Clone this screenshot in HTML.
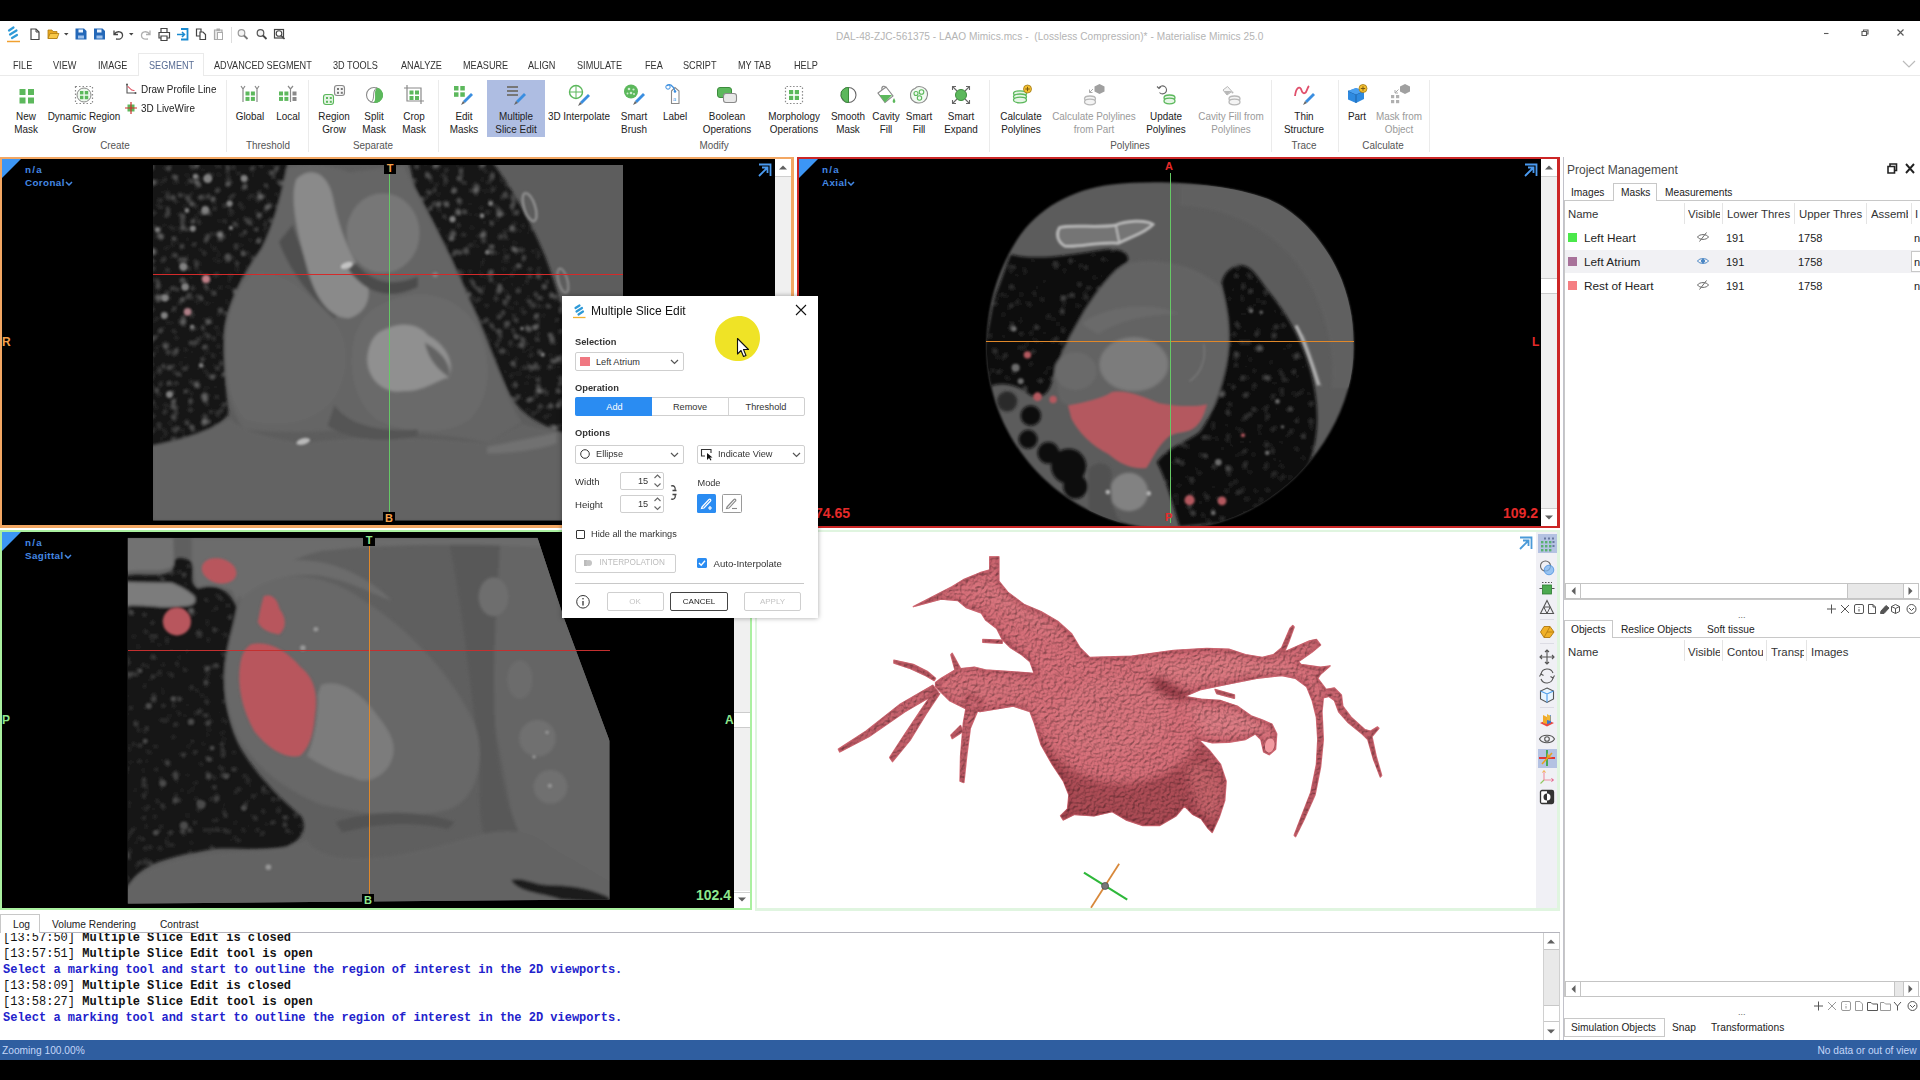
<!DOCTYPE html>
<html>
<head>
<meta charset="utf-8">
<title>Mimics</title>
<style>
*{box-sizing:border-box;margin:0;padding:0}
html,body{width:1920px;height:1080px;overflow:hidden;background:#000;font-family:"Liberation Sans",sans-serif;font-size:11px;color:#222}
.abs{position:absolute}
#app{position:absolute;left:0;top:21px;width:1920px;height:1039px;background:#fff;overflow:hidden}
/* coordinates inside #app are page-y minus 21; we use a wrapper shifted instead */
#pg{position:absolute;left:0;top:0;width:1920px;height:1080px}
.t{position:absolute;white-space:nowrap;line-height:1}
/* title */
#title{left:836px;top:32px;font-size:10.1px;color:#b4b4b4;letter-spacing:0.05px}
/* menu */
.menu{top:60px;font-size:10.5px;color:#333;transform:scaleX(.87);transform-origin:0 0}
#segtab{left:138px;top:53px;width:66px;height:23px;border:1px solid #eaeaea;border-bottom:none;background:#fff}
#ribline{left:0;top:75px;width:1920px;height:1px;background:#eaeaea}
/* ribbon */
.rl{position:absolute;white-space:nowrap;line-height:12.7px;font-size:11px;color:#222;text-align:center;transform:translateX(-50%) scaleX(.9)}
.rl.dis{color:#9a9a9a}
.grp{position:absolute;top:140px;font-size:11px;color:#555;transform:translateX(-50%) scaleX(.9);white-space:nowrap;line-height:1}
.sep{position:absolute;top:80px;width:1px;height:72px;background:#ebebeb}
/* viewports */
.vp{position:absolute;overflow:hidden;background:#000}
.vlabel{position:absolute;font-size:9.8px;font-weight:bold;color:#4488e4;line-height:13px;white-space:nowrap;letter-spacing:.4px}.vlabel i{font-style:normal;letter-spacing:1.3px}
.sb{position:absolute;background:#f0f0f0}
.sbbtn{position:absolute;left:0;width:100%;height:17px;background:#fff}
/* right panel */
.ptab{margin-top:1px;position:absolute;font-size:10.2px;color:#222;white-space:nowrap;line-height:1}
.hdr{margin-top:1px;position:absolute;font-size:11.4px;color:#333;white-space:nowrap;line-height:1}
.row{margin-top:.6px;position:absolute;font-size:11.8px;color:#222;white-space:nowrap;line-height:1}
.dl{font-size:9.300px;color:#333}.dt{font-size:9.200px;color:#333}.cb{border:1px solid #cfcfcf;border-radius:2px;background:#fff}
/* log */
.log{position:absolute;left:3px;font-family:"Liberation Mono",monospace;font-size:12px;font-weight:bold;color:#111;white-space:pre;line-height:12px;letter-spacing:0}
.log .ts{font-weight:normal}
.log.b{color:#2222cc}
</style>
</head>
<body>
<div id="pg">
<div id="app"></div>

<!-- TITLE BAR -->
<svg class="abs" style="left:0;top:24px" width="300" height="22" viewBox="0 0 300 22" fill="none">
<!-- logo -->
<g stroke="#2e9ad8" stroke-width="2.2" stroke-linecap="round"><path d="M9,6.500L13.500,3.500M10,10.500L16.500,6.500M12,14L17,11"/></g><path d="M7,17.500H20" stroke="#f0a030" stroke-width="1.500"/>
<!-- new -->
<path d="M31,5H36L39,8V15.500H31Z" stroke="#444" stroke-width="1.200" fill="#fff"/><path d="M36,5V8H39" stroke="#444" stroke-width="1"/>
<!-- open -->
<path d="M48,6H52L53,7.500H57V14.500H48Z" fill="#e8a820" stroke="#b07c10" stroke-width=".8"/><path d="M48,14.500L50,9.500H59L57,14.500Z" fill="#f8c848" stroke="#b07c10" stroke-width=".8"/>
<path d="M64,9H68.500L66.250,11.500Z" fill="#444"/>
<!-- save -->
<path d="M75.500,4.500H84L86.500,7V15.500H75.500Z" fill="#2468b8"/><rect x="78.500" y="5.500" width="4.500" height="3" fill="#eaf2fc"/><rect x="78" y="11.500" width="6" height="3" fill="#9cc0ec"/>
<path d="M94,4.500H102.500L105,7V15.500H94Z" fill="#2468b8"/><rect x="97" y="5.500" width="4.500" height="3" fill="#eaf2fc"/><rect x="96.500" y="11.500" width="6" height="3" fill="#9cc0ec"/>
<!-- undo -->
<path d="M114,6.500V10.500H118M114,10.500C117,6 123,7.500 122.500,12C122,15 119,15.500 116,15" stroke="#444" stroke-width="1.300"/>
<path d="M129,9H133.500L131.250,11.500Z" fill="#444"/>
<!-- redo -->
<path d="M150,6.500V10.500H146M150,10.500C147,6 141,7.500 141.500,12C142,15 145,15.500 148,15" stroke="#b0b0b0" stroke-width="1.300"/>
<!-- print -->
<path d="M161,8.500V4.500H167V8.500M159,8.500H169.500V14H167V12H161V14H159ZM161,12V16.500H167V12" stroke="#444" stroke-width="1.200"/>
<!-- export -->
<path d="M181,5H187.500V15.500H181M187.500,5" stroke="#1a8ad0" stroke-width="1.800"/><path d="M177,10.500H184M182,8L184.500,10.500L182,13" stroke="#1a8ad0" stroke-width="1.500"/>
<!-- copy -->
<path d="M196.500,5H201V12H196.500Z" stroke="#444" stroke-width="1.200" fill="#fff"/><path d="M200,8H203L205.500,10.500V15.500H200Z" stroke="#444" stroke-width="1.200" fill="#fff"/>
<!-- paste -->
<path d="M214.500,6H222V15.500H214.500Z" stroke="#aaa" stroke-width="1.200" fill="#e8e8e8"/><rect x="216.500" y="4.500" width="3.500" height="2.500" fill="#aaa"/><rect x="217.500" y="8.500" width="5" height="7" fill="#fff" stroke="#aaa" stroke-width="1"/>
<path d="M231.500,3V19" stroke="#ddd" stroke-width="1"/>
<!-- zoom icons -->
<circle cx="241.500" cy="9" r="3.300" stroke="#999" stroke-width="1.200" fill="#f4f4f4"/><path d="M244,11.500L247.500,15" stroke="#777" stroke-width="1.800"/>
<circle cx="260.500" cy="9" r="3.300" stroke="#555" stroke-width="1.200" fill="#f4f4f4"/><path d="M263,11.500L266.500,15" stroke="#444" stroke-width="1.800"/>
<rect x="274.500" y="5.500" width="9" height="8.500" stroke="#444" stroke-width="1.200"/><circle cx="279" cy="9.500" r="2.800" stroke="#444" stroke-width="1.100" fill="#fff"/><path d="M281,11.500L284.500,15" stroke="#444" stroke-width="1.600"/>
</svg>
<svg class="abs" style="left:1815px;top:25px" width="100" height="16" viewBox="0 0 100 16" fill="none" stroke="#5a5a5a" stroke-width="1.100"><path d="M9,8.500H13.500"/><path d="M47,6.500H51.500V10.500H47ZM48.500,6.500V5H53V9H51.500"/><path d="M82.500,4.500L88.500,10.500M88.500,4.500L82.500,10.500" stroke-width="1.200"/></svg>
<svg class="abs" style="left:1902px;top:59px" width="14" height="10" viewBox="0 0 14 10" fill="none" stroke="#bbb" stroke-width="1.200"><path d="M1,2L7,8L13,2"/></svg>

<div class="t" id="title">DAL-48-ZJC-561375 - LAAO Mimics.mcs -&nbsp; (Lossless Compression)* - Materialise Mimics 25.0</div>

<!-- MENU -->
<div class="abs" id="ribline"></div>
<div class="abs" id="segtab"></div>
<div class="t menu" style="left:13px">FILE</div>
<div class="t menu" style="left:53px">VIEW</div>
<div class="t menu" style="left:98px">IMAGE</div>
<div class="t menu" style="left:149px;color:#586c94">SEGMENT</div>
<div class="t menu" style="left:214px">ADVANCED SEGMENT</div>
<div class="t menu" style="left:333px">3D TOOLS</div>
<div class="t menu" style="left:401px">ANALYZE</div>
<div class="t menu" style="left:463px">MEASURE</div>
<div class="t menu" style="left:528px">ALIGN</div>
<div class="t menu" style="left:577px">SIMULATE</div>
<div class="t menu" style="left:645px">FEA</div>
<div class="t menu" style="left:683px">SCRIPT</div>
<div class="t menu" style="left:738px">MY TAB</div>
<div class="t menu" style="left:794px">HELP</div>

<!-- RIBBON -->
<!--RIB--><div class="abs" style="left:487px;top:80px;width:58px;height:57px;background:#aebde2"></div>
<svg class="abs" style="left:14px;top:83px" width="24" height="24" viewBox="0 0 24 24"><rect x="5.5" y="6.0" width="6" height="6" fill="#5cb85c"/><rect x="5.5" y="14.5" width="6" height="6" fill="#5cb85c"/><rect x="14.0" y="6.0" width="6" height="6" fill="#5cb85c"/><rect x="14.0" y="14.5" width="6" height="6" fill="#5cb85c"/></svg><div class="rl" style="left:26px;top:110px">New<br>Mask</div>
<svg class="abs" style="left:72px;top:83px" width="24" height="24" viewBox="0 0 24 24"><rect x="3.5" y="3.5" width="17" height="17" fill="none" stroke="#8a8a8a" stroke-dasharray="1.5 2" stroke-width="1.2"/><circle cx="12" cy="12" r="7" fill="#eef8ee" stroke="#8a8a8a" stroke-width="1"/><rect x="8.0" y="8.0" width="3.4" height="3.4" fill="#5cb85c"/><rect x="8.0" y="12.8" width="3.4" height="3.4" fill="#5cb85c"/><rect x="12.8" y="8.0" width="3.4" height="3.4" fill="#5cb85c"/><rect x="12.8" y="12.8" width="3.4" height="3.4" fill="#5cb85c"/></svg><div class="rl" style="left:84px;top:110px">Dynamic Region<br>Grow</div>
<svg class="abs" style="left:238px;top:83px" width="24" height="24" viewBox="0 0 24 24"><path d="M3,3L5,6L7,3M5,6V19M17,3L19,6L21,3M19,6V19" fill="none" stroke="#8a8a8a" stroke-width="1.2"/><rect x="7.5" y="8.5" width="4" height="4" fill="#5cb85c"/><rect x="7.5" y="13.9" width="4" height="4" fill="#5cb85c"/><rect x="12.9" y="8.5" width="4" height="4" fill="#5cb85c"/><rect x="12.9" y="13.9" width="4" height="4" fill="#5cb85c"/></svg><div class="rl" style="left:250px;top:110px">Global</div>
<svg class="abs" style="left:276px;top:83px" width="24" height="24" viewBox="0 0 24 24"><rect x="3.0" y="8.5" width="4" height="4" fill="#5cb85c"/><rect x="3.0" y="13.9" width="4" height="4" fill="#5cb85c"/><rect x="8.4" y="8.5" width="4" height="4" fill="#5cb85c"/><rect x="8.4" y="13.9" width="4" height="4" fill="#5cb85c"/><path d="M12,3L14.5,6L17,3M14.500,6V19" fill="none" stroke="#8a8a8a" stroke-width="1.2"/><rect x="16.500" y="8.500" width="4" height="4" fill="#8a8a8a"/><rect x="16.500" y="14" width="4" height="4" fill="#8a8a8a"/></svg><div class="rl" style="left:288px;top:110px">Local</div>
<svg class="abs" style="left:321.5px;top:83px" width="24" height="24" viewBox="0 0 24 24"><rect x="12.500" y="2.500" width="10" height="10" rx="2.500" fill="#f4f4f4" stroke="#8a8a8a" stroke-width="1.100"/><rect x="15.0" y="5.0" width="2" height="2" fill="#777"/><rect x="15.0" y="8.8" width="2" height="2" fill="#777"/><rect x="18.8" y="5.0" width="2" height="2" fill="#777"/><rect x="18.8" y="8.8" width="2" height="2" fill="#777"/><rect x="1.500" y="11.500" width="10" height="10" rx="2.500" fill="#e4f4e4" stroke="#5cb85c" stroke-width="1.100"/><rect x="4.0" y="14.0" width="2" height="2" fill="#5cb85c"/><rect x="4.0" y="17.8" width="2" height="2" fill="#5cb85c"/><rect x="7.8" y="14.0" width="2" height="2" fill="#5cb85c"/><rect x="7.8" y="17.8" width="2" height="2" fill="#5cb85c"/></svg><div class="rl" style="left:333.5px;top:110px">Region<br>Grow</div>
<svg class="abs" style="left:362px;top:83px" width="24" height="24" viewBox="0 0 24 24"><circle cx="12" cy="12" r="7.500" fill="#fff" stroke="#8a8a8a" stroke-width="1.100"/><path d="M15,4.800A7.500,7.500 0 0 1 12,19.500C15,16 12,9 15,4.800Z" fill="#5cb85c"/><path d="M12,19.500A7.500,7.500 0 0 0 15,4.800C11,9 15,15 12,19.500Z" fill="#5cb85c"/><path d="M9,19.500C14,15 9,9 15,4.500" fill="none" stroke="#8a8a8a" stroke-width="1"/></svg><div class="rl" style="left:374px;top:110px">Split<br>Mask</div>
<svg class="abs" style="left:402px;top:83px" width="24" height="24" viewBox="0 0 24 24"><path d="M5,2V18H22M2,5H19V21" fill="none" stroke="#8a8a8a" stroke-width="1.200"/><rect x="7.5" y="7.5" width="4" height="4" fill="#5cb85c"/><rect x="7.5" y="13.0" width="4" height="4" fill="#5cb85c"/><rect x="13.0" y="7.5" width="4" height="4" fill="#5cb85c"/><rect x="13.0" y="13.0" width="4" height="4" fill="#5cb85c"/></svg><div class="rl" style="left:414px;top:110px">Crop<br>Mask</div>
<svg class="abs" style="left:452px;top:83px" width="24" height="24" viewBox="0 0 24 24"><rect x="2.0" y="3.0" width="4.5" height="4.5" fill="#5cb85c"/><rect x="2.0" y="9.3" width="4.5" height="4.5" fill="#5cb85c"/><rect x="8.3" y="3.0" width="4.5" height="4.5" fill="#5cb85c"/><rect x="8.3" y="9.3" width="4.5" height="4.5" fill="#5cb85c"/><path d="M11,18L19,10L21,12L13,20Z" fill="#3a8ee0"/><path d="M9,22L11,18L13,20Z" fill="#666"/></svg><div class="rl" style="left:464px;top:110px">Edit<br>Masks</div>
<svg class="abs" style="left:504px;top:83px" width="24" height="24" viewBox="0 0 24 24"><path d="M3,4H14M3,8H14M3,12H14" stroke="#777" stroke-width="1.800"/><path d="M12,18L20,10L22,12L14,20Z" fill="#3a8ee0"/><path d="M10,22L12,18L14,20Z" fill="#666"/></svg><div class="rl" style="left:516px;top:110px">Multiple<br>Slice Edit</div>
<svg class="abs" style="left:567px;top:83px" width="24" height="24" viewBox="0 0 24 24"><circle cx="9" cy="9" r="6.500" fill="none" stroke="#5cb85c" stroke-width="1.400"/><path d="M9,2.500V15.500M2.500,9H15.500" stroke="#5cb85c" stroke-width="1"/><path d="M13,19L21,11L23,13L15,21Z" fill="#3a8ee0"/><path d="M11,23L13,19L15,21Z" fill="#666"/></svg><div class="rl" style="left:579px;top:110px">3D Interpolate</div>
<svg class="abs" style="left:622px;top:83px" width="24" height="24" viewBox="0 0 24 24"><circle cx="9" cy="8.500" r="7" fill="#5cb85c"/><circle cx="7" cy="6" r="1.300" fill="#cfeccf"/><circle cx="11.500" cy="6.500" r="1.100" fill="#cfeccf"/><circle cx="9" cy="10" r="1.300" fill="#cfeccf"/><circle cx="12" cy="11" r="1" fill="#cfeccf"/><circle cx="5.500" cy="10.500" r="1" fill="#cfeccf"/><path d="M13,18L21,10L23,12L15,20Z" fill="#3a8ee0"/><path d="M11,22L13,18L15,20Z" fill="#666"/></svg><div class="rl" style="left:634px;top:110px">Smart<br>Brush</div>
<svg class="abs" style="left:662.5px;top:83px" width="24" height="24" viewBox="0 0 24 24"><path d="M8.500,8L12,4.500L16,8V20.500H8.500Z" fill="#fff" stroke="#8a8a8a" stroke-width="1.100"/><circle cx="12" cy="8.500" r="1.300" fill="#3a8ee0"/><path d="M4,3C6,0 10,2 12,8" fill="none" stroke="#3a8ee0" stroke-width="1.200"/><circle cx="5" cy="4" r="2.200" fill="none" stroke="#3a8ee0" stroke-width="1"/><text x="10" y="18" font-size="7" fill="#3a8ee0" font-family="Liberation Serif">a</text></svg><div class="rl" style="left:674.5px;top:110px">Label</div>
<svg class="abs" style="left:714.5px;top:83px" width="24" height="24" viewBox="0 0 24 24"><rect x="2.500" y="4.500" width="14" height="10" rx="2.500" fill="#5cb85c" stroke="#3c8c3c" stroke-width="1"/><rect x="8.500" y="10.500" width="13" height="9" rx="2.500" fill="#e8e8e8" stroke="#8a8a8a" stroke-width="1.100"/></svg><div class="rl" style="left:726.5px;top:110px">Boolean<br>Operations</div>
<svg class="abs" style="left:781.5px;top:83px" width="24" height="24" viewBox="0 0 24 24"><rect x="3.500" y="3.500" width="17" height="17" rx="1" fill="none" stroke="#8a8a8a" stroke-dasharray="1.500 1.800" stroke-width="1.200"/><rect x="7.0" y="7.0" width="4.2" height="4.2" fill="#5cb85c"/><rect x="7.0" y="12.8" width="4.2" height="4.2" fill="#5cb85c"/><rect x="12.8" y="7.0" width="4.2" height="4.2" fill="#5cb85c"/><rect x="12.8" y="12.8" width="4.2" height="4.2" fill="#5cb85c"/></svg><div class="rl" style="left:793.5px;top:110px">Morphology<br>Operations</div>
<svg class="abs" style="left:836px;top:83px" width="24" height="24" viewBox="0 0 24 24"><circle cx="12.500" cy="12" r="7.500" fill="#fff" stroke="#666" stroke-width="1.100"/><path d="M12.500,4.500C9,4.500 8,6 7,7C5,8 5,10 5.500,11C4.500,13 5.500,15 7,16C8,18.500 10,19.500 12.500,19.500Z" fill="#5cb85c" stroke="#3c8c3c" stroke-width="1"/></svg><div class="rl" style="left:848px;top:110px">Smooth<br>Mask</div>
<svg class="abs" style="left:873.5px;top:83px" width="24" height="24" viewBox="0 0 24 24"><path d="M4,10L12,4L19,13L11,19.500Z" fill="#fff" stroke="#8a8a8a" stroke-width="1.100"/><path d="M5.500,12H18L11,19.500Z" fill="#5cb85c"/><path d="M8,7C7,3 11,2 12,5" fill="none" stroke="#8a8a8a" stroke-width="1.100"/><path d="M20,15C21.500,17.500 22,19.500 20,20C18,19.500 18.500,17.500 20,15Z" fill="#5cb85c"/></svg><div class="rl" style="left:885.5px;top:110px">Cavity<br>Fill</div>
<svg class="abs" style="left:907px;top:83px" width="24" height="24" viewBox="0 0 24 24"><path d="M12,3.500C17,3.500 21,7 20.500,12C20,17 16,20.500 11,20C6,19.500 3,16 3.500,11C4,8 6,6 8,5.500C9,4 10.500,3.500 12,3.500Z" fill="#f2faf2" stroke="#8a8a8a" stroke-width="1.100"/><circle cx="9" cy="10.500" r="2" fill="none" stroke="#5cb85c" stroke-width="1.100"/><circle cx="14.500" cy="9" r="2.300" fill="none" stroke="#5cb85c" stroke-width="1.100"/><circle cx="12.500" cy="15" r="2.200" fill="none" stroke="#5cb85c" stroke-width="1.100"/></svg><div class="rl" style="left:919px;top:110px">Smart<br>Fill</div>
<svg class="abs" style="left:949px;top:83px" width="24" height="24" viewBox="0 0 24 24"><circle cx="12" cy="12" r="5.500" fill="#5cb85c" stroke="#3c8c3c" stroke-width="1"/><path d="M8,8L3.500,3.500M3.500,7V3.500H7M16,8L20.500,3.500M17,3.500H20.500V7M8,16L3.500,20.500M3.500,17V20.500H7M16,16L20.500,20.500M17,20.500H20.500V17" fill="none" stroke="#666" stroke-width="1.100"/></svg><div class="rl" style="left:961px;top:110px">Smart<br>Expand</div>
<svg class="abs" style="left:1009px;top:83px" width="24" height="24" viewBox="0 0 24 24"><ellipse cx="11" cy="10.6" rx="6.5" ry="2.8" fill="#e6f5e6" stroke="#5cb85c" stroke-width="1.3"/><ellipse cx="11" cy="13.8" rx="6.5" ry="2.8" fill="#e6f5e6" stroke="#5cb85c" stroke-width="1.3"/><ellipse cx="11" cy="17.0" rx="6.5" ry="2.8" fill="#e6f5e6" stroke="#5cb85c" stroke-width="1.3"/><circle cx="18.5" cy="6" r="4" fill="#f5c030" stroke="#a07818" stroke-width=".8"/><path d="M16.3,6H20.7M18.5,3.8V8.2" stroke="#7a5a10" stroke-width="1"/></svg><div class="rl" style="left:1021px;top:110px">Calculate<br>Polylines</div>
<svg class="abs" style="left:1081.5px;top:83px" width="24" height="24" viewBox="0 0 24 24"><ellipse cx="8" cy="15.8" rx="5.5" ry="2.8" fill="#f4f4f4" stroke="#b8b8b8" stroke-width="1.3"/><ellipse cx="8" cy="19.0" rx="5.5" ry="2.8" fill="#f4f4f4" stroke="#b8b8b8" stroke-width="1.3"/><path d="M17.5,1L22.5,3.5V8.5L17.5,11L12.5,8.5V3.5Z" fill="#a0a0a0"/><path d="M11,6L7.500,9.500M7.500,6.500V9.500H10.500" fill="none" stroke="#aaa" stroke-width="1"/></svg><div class="rl dis" style="left:1093.5px;top:110px">Calculate Polylines<br>from Part</div>
<svg class="abs" style="left:1154px;top:83px" width="24" height="24" viewBox="0 0 24 24"><path d="M5,5A4,4 0 1 1 5.500,9.500" fill="none" stroke="#666" stroke-width="1.100"/><path d="M3,3.500L5,5.500L7,3.500" fill="none" stroke="#666" stroke-width="1.100"/><ellipse cx="15.5" cy="14.8" rx="5.5" ry="2.8" fill="#e6f5e6" stroke="#5cb85c" stroke-width="1.3"/><ellipse cx="15.5" cy="18.0" rx="5.5" ry="2.8" fill="#e6f5e6" stroke="#5cb85c" stroke-width="1.3"/></svg><div class="rl" style="left:1166px;top:110px">Update<br>Polylines</div>
<svg class="abs" style="left:1219px;top:83px" width="24" height="24" viewBox="0 0 24 24"><path d="M4,7L8.500,3.500L13,8.500L8,12Z" fill="#f4f4f4" stroke="#b8b8b8" stroke-width="1"/><path d="M5,8H12.500L8,12Z" fill="#b8b8b8"/><circle cx="13.500" cy="9.500" r="1" fill="#b8b8b8"/><ellipse cx="15.5" cy="15.8" rx="5.5" ry="2.8" fill="#f4f4f4" stroke="#b8b8b8" stroke-width="1.3"/><ellipse cx="15.5" cy="19.0" rx="5.5" ry="2.8" fill="#f4f4f4" stroke="#b8b8b8" stroke-width="1.3"/></svg><div class="rl dis" style="left:1231px;top:110px">Cavity Fill from<br>Polylines</div>
<svg class="abs" style="left:1292px;top:83px" width="24" height="24" viewBox="0 0 24 24"><path d="M3,13C4,5 7,3 9,6C10,9 11,11 13,10C15,9 15,5 17,3" fill="none" stroke="#e0506c" stroke-width="1.800"/><path d="M13,18L21,10L23,12L15,20Z" fill="#3a8ee0"/><path d="M11,22L13,18L15,20Z" fill="#666"/></svg><div class="rl" style="left:1304px;top:110px">Thin<br>Structure</div>
<svg class="abs" style="left:1344.5px;top:83px" width="24" height="24" viewBox="0 0 24 24"><path d="M11,5L19,8V16L11,20L3,16.500V8Z" fill="#2e8ae0"/><path d="M3,8L11,11.500L19,8M11,11.500V20" fill="none" stroke="#1c62a8" stroke-width="1"/><path d="M3,8L11,5L19,8L11,11.500Z" fill="#4aa0f0"/><circle cx="18" cy="5.5" r="4" fill="#f5c030" stroke="#a07818" stroke-width=".8"/><path d="M15.8,5.5H20.2M18,3.3V7.7" stroke="#7a5a10" stroke-width="1"/></svg><div class="rl" style="left:1356.5px;top:110px">Part</div>
<svg class="abs" style="left:1387px;top:83px" width="24" height="24" viewBox="0 0 24 24"><rect x="4.0" y="12.0" width="3.2" height="3.2" fill="#b0b0b0"/><rect x="4.0" y="17.0" width="3.2" height="3.2" fill="#b0b0b0"/><rect x="9.0" y="12.0" width="3.2" height="3.2" fill="#b0b0b0"/><rect x="9.0" y="17.0" width="3.2" height="3.2" fill="#b0b0b0"/><path d="M18,1L23,3.5V8.5L18,11L13,8.5V3.5Z" fill="#a0a0a0"/><path d="M11.500,6.500L8,10M8,7V10H11" fill="none" stroke="#aaa" stroke-width="1"/></svg><div class="rl dis" style="left:1399px;top:110px">Mask from<br>Object</div>
<svg class="abs" style="left:125px;top:83px" width="12" height="12" viewBox="0 0 12 12" fill="none"><path d="M2,1V10H11" stroke="#555" stroke-width="1.100"/><path d="M2.500,3.500C5,4 5,8 9.500,7.500" stroke="#e05060" stroke-width="1.100"/><circle cx="2" cy="1.500" r="1" fill="#555"/><circle cx="10.500" cy="10" r="1" fill="#555"/></svg><div class="rl" style="left:141px;top:83px;transform:scaleX(.9);transform-origin:0 0">Draw Profile Line</div><svg class="abs" style="left:125px;top:102px" width="12" height="12" viewBox="0 0 12 12"><rect x="2.500" y="2.500" width="7" height="7" fill="#5cb85c"/><path d="M0,6H12M6,0V12" stroke="#d03030" stroke-width="1.200"/></svg><div class="rl" style="left:141px;top:102px;transform:scaleX(.9);transform-origin:0 0">3D LiveWire</div>
<div class="grp" style="left:114.5px">Create</div><div class="grp" style="left:268px">Threshold</div><div class="grp" style="left:373px">Separate</div><div class="grp" style="left:713.5px">Modify</div><div class="grp" style="left:1130px">Polylines</div><div class="grp" style="left:1304px">Trace</div><div class="grp" style="left:1383px">Calculate</div><div class="sep" style="left:226px"></div><div class="sep" style="left:308px"></div><div class="sep" style="left:437.5px"></div><div class="sep" style="left:988.5px"></div><div class="sep" style="left:1271px"></div><div class="sep" style="left:1337.5px"></div><div class="sep" style="left:1429px"></div><!--/RIB-->

<!-- VIEWPORTS -->
<div class="abs" style="left:0;top:157px;width:794px;height:371px;background:#f3a763"></div>
<div class="vp" style="left:2px;top:159px;width:773px;height:366px">
<svg class="abs" style="left:0;top:0" width="773" height="366" viewBox="2 159 773 366">
<defs>
<filter id="bz" x="-5%" y="-5%" width="110%" height="110%"><feGaussianBlur stdDeviation="5"/></filter>
<filter id="bz2" x="-5%" y="-5%" width="110%" height="110%"><feGaussianBlur stdDeviation="2.5"/></filter>
<filter id="ltex" x="0" y="0" width="100%" height="100%"><feTurbulence type="fractalNoise" baseFrequency="0.045" numOctaves="3" seed="5"/><feColorMatrix values="0 0 0 0 .5  0 0 0 0 .5  0 0 0 0 .5  0 0 0 2.4 -1.42"/><feComposite in2="SourceGraphic" operator="in"/><feGaussianBlur stdDeviation="2"/></filter><filter id="ltex2" x="0" y="0" width="100%" height="100%"><feTurbulence type="fractalNoise" baseFrequency="0.045" numOctaves="3" seed="5"/><feColorMatrix values="0 0 0 0 .4  0 0 0 0 .4  0 0 0 0 .4  0 0 0 2.2 -1.42"/><feComposite in2="SourceGraphic" operator="in"/><feGaussianBlur stdDeviation="2"/></filter>
<clipPath id="ccor"><rect x="153" y="165" width="470" height="355.5"/></clipPath>
</defs>
<g clip-path="url(#ccor)">
<g transform="translate(140,155) scale(0.34722)">
<rect x="0" y="0" width="1440" height="1080" fill="#5d5d5d"/>
<g filter="url(#bz)">
<!-- heart mass -->
<path d="M420,40 C470,20 560,30 600,50 L760,30 C800,120 860,230 900,310 C950,420 1000,520 1040,640 C1060,700 1080,740 1100,770 L1000,830 C900,800 700,800 600,790 C500,800 400,800 300,790 C260,740 240,650 245,520 C255,420 300,340 350,270 C385,200 405,120 420,40 Z" fill="#656565"/>
<!-- below diaphragm -->
<path d="M38,835 C120,820 200,790 260,760 C300,800 400,820 470,830 C600,810 800,810 1000,830 L1100,775 C1180,800 1300,810 1390,780 L1390,1050 L38,1050 Z" fill="#636363"/>
<!-- left lung -->
<path d="M30,20 L425,20 C410,110 385,200 350,270 C300,340 255,420 243,500 C238,600 250,690 255,745 C230,790 120,820 30,838 Z" fill="#161616"/>
<!-- right lung -->
<path d="M775,20 L1015,20 C1080,110 1130,200 1170,300 C1200,380 1230,480 1250,560 L1250,810 C1180,790 1110,760 1070,700 C1020,600 990,500 950,420 C900,300 850,200 790,90 Z" fill="#161616"/>
<path d="M30,20 L425,20 C410,110 385,200 350,270 C300,340 255,420 243,500 C238,600 250,690 255,745 C230,790 120,820 30,838 Z" fill="#fff" filter="url(#ltex)"/><path d="M775,20 L1015,20 C1080,110 1130,200 1170,300 C1200,380 1230,480 1250,560 L1250,810 C1180,790 1110,760 1070,700 C1020,600 990,500 950,420 C900,300 850,200 790,90 Z" fill="#fff" filter="url(#ltex)"/>
<!-- dark band between aorta and RA -->
<path d="M400,250 C430,330 480,400 560,470 L590,440 C520,380 470,300 440,200 Z" fill="#505050"/>
<!-- RA -->
<path d="M330,340 C400,330 470,380 560,480 C610,540 600,640 560,700 C500,780 380,790 300,760 C250,700 240,600 250,500 C260,430 290,370 330,340 Z" fill="#686868"/>
<!-- aorta -->
<path d="M450,70 C490,30 540,50 555,120 C570,200 600,280 640,340 C680,400 650,460 600,470 C540,470 500,400 480,320 C455,230 430,130 450,70 Z" fill="#8a8a8a"/>
<!-- PA -->
<ellipse cx="700" cy="225" rx="105" ry="115" fill="#777777"/>
<!-- dark groove -->
<path d="M600,330 C650,400 720,420 800,380 L800,350 C730,380 670,370 620,310 Z" fill="#4c4c4c"/>
<!-- LV wall -->
<path d="M700,430 C800,380 900,400 960,480 C1020,580 1010,700 950,760 C880,810 760,800 680,760 C610,700 600,600 620,520 C640,470 660,445 700,430 Z" fill="#6b6b6b"/>
<!-- LV cavity -->
<path d="M690,510 C740,480 800,480 830,520 C870,540 910,590 890,640 C850,650 820,680 760,680 C700,690 650,640 655,580 C660,545 670,525 690,510 Z" fill="#909090"/>
<path d="M820,540 C860,560 900,600 890,640 C860,620 830,590 820,540 Z" fill="#646464"/>
<!-- lower dark bits -->
<path d="M560,720 C600,780 700,800 800,790 L800,810 C700,830 600,820 540,780 Z" fill="#555555"/>
<path d="M1000,840 C1060,830 1150,810 1200,800 L1200,830 C1140,850 1060,860 1000,860 Z" fill="#717171"/>
</g>
<g filter="url(#bz2)">
<!-- lung vessels -->
<g fill="#828282">
<circle cx="195" cy="68" r="13"/><circle cx="160" cy="62" r="8"/><circle cx="300" cy="68" r="10"/><circle cx="258" cy="140" r="9"/>
<circle cx="188" cy="158" r="11"/><circle cx="135" cy="160" r="7"/><circle cx="152" cy="212" r="9"/><circle cx="262" cy="210" r="6"/>
<circle cx="50" cy="215" r="7"/><circle cx="125" cy="322" r="12"/><circle cx="130" cy="380" r="11"/><circle cx="72" cy="412" r="10"/>
<circle cx="70" cy="462" r="10"/><circle cx="85" cy="690" r="10"/><circle cx="176" cy="606" r="7"/><circle cx="150" cy="495" r="6"/>
<circle cx="900" cy="185" r="9"/><circle cx="985" cy="175" r="7"/><circle cx="1000" cy="280" r="6"/><circle cx="1010" cy="140" r="6"/>
<circle cx="1160" cy="575" r="6"/><circle cx="1100" cy="500" r="5"/><circle cx="850" cy="345" r="8"/>
</g>
<circle cx="190" cy="357" r="12" fill="#c08088"/><circle cx="137" cy="452" r="11" fill="#b08088"/>
<!-- calcifications -->
<ellipse cx="595" cy="318" rx="18" ry="9" fill="#c4c4c4" transform="rotate(-20 595 318)"/>
<ellipse cx="470" cy="825" rx="20" ry="9" fill="#b9b9b9" transform="rotate(-15 470 825)"/>
<!-- ribs -->
<ellipse cx="1122" cy="150" rx="16" ry="42" fill="none" stroke="#929292" stroke-width="7" transform="rotate(-18 1122 150)"/>
<ellipse cx="1218" cy="362" rx="13" ry="36" fill="none" stroke="#8d8d8d" stroke-width="6" transform="rotate(-15 1218 362)"/>
</g>
</g>
</g>
<!-- crosshair -->
<rect x="153" y="274" width="470" height="1" fill="#d42a2a"/>
<rect x="389" y="165" width="1" height="356" fill="#66c866"/>
</svg>
<svg class="abs" style="left:0;top:0" width="20" height="20"><path d="M0,0H19L0,19Z" fill="#3c96f5"/></svg>
<div class="vlabel" style="left:23px;top:3.5px"><i>n/a</i><br>Coronal<svg style="display:inline-block;vertical-align:0px;margin-left:0px" width="8" height="5" viewBox="0 0 8 5" fill="none" stroke="#4488e4" stroke-width="1.500"><path d="M1,1L4,4L7,1"/></svg></div>
<div class="t" style="left:382px;top:3px;width:12px;height:12px;background:#000;color:#f5a04a;font-weight:bold;font-size:11px;text-align:center;line-height:12px">T</div>
<div class="t" style="left:381px;top:353px;width:12px;height:12px;background:#000;color:#f5a04a;font-weight:bold;font-size:11px;text-align:center;line-height:12px">B</div>
<div class="t" style="left:0px;top:177px;color:#f5a04a;font-weight:bold;font-size:12px">R</div>
<svg class="abs" style="left:754px;top:3px" width="17" height="17" viewBox="0 0 17 17" fill="none" stroke="#4a9af0" stroke-width="1.8"><path d="M3,2.5H14.5V14M6,5.5H11.5V11M11.5,5.5L3,14"/></svg>
</div>
<div class="sb" style="left:775px;top:159px;width:16px;height:366px"><div class="sbbtn" style="top:0"></div>
<svg class="abs" style="left:4px;top:6px" width="8" height="5"><path d="M0,4.5L4,0.5L8,4.5Z" fill="#606060"/></svg>
<div class="abs" style="left:0;top:17px;width:16px;height:1px;background:#cfcfcf"></div></div>

<div class="abs" style="left:797px;top:157px;width:763px;height:371px;background:#cc2626"></div>
<div class="vp" style="left:799px;top:159px;width:742px;height:367px">
<svg class="abs" style="left:0;top:0" width="742" height="367" viewBox="799 159 742 367">
<defs><clipPath id="cax"><path d="M50,540 C50,400 90,300 140,220 C200,130 300,72 420,58 C550,42 750,52 880,100 C980,140 1060,240 1100,340 C1130,420 1136,480 1136,540 C1136,800 900,1078 592,1078 C290,1078 50,830 50,540 Z"/></clipPath></defs>
<g transform="translate(970,165) scale(0.33784)">
<g filter="url(#bz2)"><path d="M50,540 C50,400 90,300 140,220 C200,130 300,72 420,58 C550,42 750,52 880,100 C980,140 1060,240 1100,340 C1130,420 1136,480 1136,540 C1136,800 900,1078 592,1078 C290,1078 50,830 50,540 Z" fill="#5b5b5b"/></g>
<g clip-path="url(#cax)">
<g filter="url(#bz)">
<!-- outer chest wall slightly lighter band -->
<path d="M620,120 C800,130 950,220 1020,380 C1060,470 1080,560 1070,660 L1136,660 L1136,60 L620,60 Z" fill="#606060"/>
<!-- heart mass -->
<path d="M470,290 C560,270 680,300 740,360 C770,440 770,560 740,680 C700,760 640,800 560,800 C460,760 330,740 270,700 C240,640 270,540 320,460 C360,390 410,320 470,290 Z" fill="#636363"/>
<!-- left lung -->
<path d="M40,560 L70,400 L120,265 C200,285 300,265 400,250 C450,245 478,265 465,288 C420,312 380,370 340,430 C300,500 265,560 245,630 C235,680 215,692 180,682 C140,650 100,640 60,655 Z" fill="#0e0e0e"/>
<circle cx="180" cy="742" r="30" fill="#0e0e0e"/><circle cx="172" cy="812" r="28" fill="#0e0e0e"/><circle cx="232" cy="852" r="32" fill="#0e0e0e"/>
<circle cx="292" cy="892" r="52" fill="#0e0e0e"/><circle cx="312" cy="952" r="36" fill="#0e0e0e"/><circle cx="110" cy="700" r="30" fill="#292929"/>
<!-- right lung -->
<path d="M790,298 C830,290 850,330 880,370 C930,430 975,500 1005,600 C1035,700 1035,800 1005,880 C965,955 880,1015 790,1055 L620,1070 C600,1000 580,930 553,880 C590,830 640,822 680,790 C720,740 750,650 765,560 C775,480 760,420 745,350 C750,320 770,305 790,298 Z" fill="#0c0c0c"/>
<path d="M40,560 L70,400 L120,265 C200,285 300,265 400,250 C450,245 478,265 465,288 C420,312 380,370 340,430 C300,500 265,560 245,630 C235,680 215,692 180,682 C140,650 100,640 60,655 Z" fill="#fff" filter="url(#ltex2)"/><path d="M790,298 C830,290 850,330 880,370 C930,430 975,500 1005,600 C1035,700 1035,800 1005,880 C965,955 880,1015 790,1055 L620,1070 C600,1000 580,930 553,880 C590,830 640,822 680,790 C720,740 750,650 765,560 C775,480 760,420 745,350 C750,320 770,305 790,298 Z" fill="#fff" filter="url(#ltex2)"/>
<!-- aorta root -->
<ellipse cx="485" cy="590" rx="102" ry="80" fill="#7b7b7b"/>
<ellipse cx="312" cy="610" rx="62" ry="55" fill="#6b6b6b"/>
<path d="M330,470 C400,420 520,400 620,440 C560,440 450,450 380,500 Z" fill="#6a6a6a"/>
<!-- desc aorta -->
<circle cx="470" cy="968" r="57" fill="#828282"/>
<!-- spine area -->
<path d="M350,900 C380,870 420,880 420,920 C410,1000 430,1050 470,1080 L350,1080 Z" fill="#515151"/>
</g>
<g filter="url(#bz2)">
<!-- LA mask -->
<path d="M290,712 C340,702 390,692 420,672 C470,664 520,690 560,705 C620,716 670,716 702,708 C692,740 682,772 650,786 C620,796 600,790 580,812 C550,842 540,872 522,897 C480,902 440,882 410,856 C360,830 320,790 300,750 Z" fill="#b4585f"/>
<g fill="#b4585f"><circle cx="170" cy="562" r="11"/><circle cx="200" cy="686" r="13"/><circle cx="246" cy="694" r="11"/><circle cx="650" cy="992" r="15"/><circle cx="746" cy="994" r="13"/><circle cx="808" cy="800" r="6"/></g>
<!-- sternum -->
<path d="M265,185 C300,175 380,187 430,178 C460,165 520,160 542,176 C520,202 470,215 440,232 C380,226 320,246 280,240 C255,225 255,200 265,185 Z" fill="#747474" stroke="#bababa" stroke-width="8"/>
<path d="M432,180 L442,230" stroke="#bababa" stroke-width="6"/>
<!-- ribs -->
<path d="M965,475 C990,520 1012,585 1032,652" stroke="#b4b4b4" stroke-width="9" fill="none"/>
<path d="M985,500 C1005,545 1022,600 1040,655" stroke="#777777" stroke-width="4" fill="none"/>
<path d="M692,530 C700,580 680,620 650,640" stroke="#757575" stroke-width="5" fill="none"/>
<!-- vessels in lungs -->
<g fill="#6c6c6c"><circle cx="130" cy="485" r="8"/><circle cx="135" cy="600" r="12"/><circle cx="150" cy="640" r="9"/><circle cx="832" cy="432" r="6"/><circle cx="862" cy="436" r="5"/>
<circle cx="910" cy="700" r="7"/><circle cx="880" cy="852" r="7"/><circle cx="735" cy="880" r="10"/><circle cx="720" cy="1030" r="7"/><circle cx="925" cy="775" r="5"/></g>
<circle cx="408" cy="968" r="7" fill="#b3b3b3"/><circle cx="529" cy="972" r="7" fill="#b3b3b3"/>
</g>
</g>
</g>
<rect x="986" y="341" width="368" height="1" fill="#e0882a"/>
<rect x="1170" y="173" width="1" height="350" fill="#66c866"/>
</svg>
<svg class="abs" style="left:0;top:0" width="20" height="20"><path d="M0,0H19L0,19Z" fill="#3c96f5"/></svg>
<div class="vlabel" style="left:23px;top:3.5px"><i>n/a</i><br>Axial<svg style="display:inline-block;vertical-align:0px;margin-left:0px" width="8" height="5" viewBox="0 0 8 5" fill="none" stroke="#4488e4" stroke-width="1.500"><path d="M1,1L4,4L7,1"/></svg></div>
<div class="t" style="left:366px;top:2px;color:#e62a2a;font-weight:bold;font-size:11px">A</div>
<div class="t" style="left:366px;top:353px;color:#e62a2a;font-weight:bold;font-size:11px">P</div>
<div class="t" style="left:733px;top:177px;color:#e62a2a;font-weight:bold;font-size:12px">L</div>
<div class="t" style="left:16px;top:347px;color:#e62a2a;font-weight:bold;font-size:14px">74.65</div>
<div class="t" style="left:704px;top:347px;color:#e62a2a;font-weight:bold;font-size:14px">109.2</div>
<svg class="abs" style="left:723px;top:3px" width="17" height="17" viewBox="0 0 17 17" fill="none" stroke="#4a9af0" stroke-width="1.8"><path d="M3,2.5H14.5V14M6,5.5H11.5V11M11.5,5.5L3,14"/></svg>
</div>
<div class="sb" style="left:1541px;top:159px;width:16px;height:367px"><div class="sbbtn" style="top:0"></div><div class="sbbtn" style="bottom:0"></div>
<svg class="abs" style="left:4px;top:6px" width="8" height="5"><path d="M0,4.5L4,0.5L8,4.5Z" fill="#606060"/></svg>
<svg class="abs" style="left:4px;top:356px" width="8" height="5"><path d="M0,0.5L4,4.5L8,0.5Z" fill="#606060"/></svg>
<div class="abs" style="left:0;top:17px;width:16px;height:1px;background:#cfcfcf"></div>
<div class="abs" style="left:0;top:349px;width:16px;height:1px;background:#cfcfcf"></div>
<div class="abs" style="left:0;top:119px;width:16px;height:16px;background:#fff;border-top:1px solid #ccc;border-bottom:1px solid #ccc"></div></div>

<div class="abs" style="left:0;top:529.5px;width:752px;height:380.5px;background:#aaf0a0"></div>
<div class="vp" style="left:2px;top:532px;width:732px;height:376px">
<svg class="abs" style="left:0;top:0" width="732" height="376" viewBox="2 532 732 376">
<defs><clipPath id="csag"><path d="M50,22 L1215,22 L1290,250 L1420,600 L1420,1050 L50,1062 Z"/></clipPath></defs>
<g transform="translate(110,530) scale(0.35185)">
<g clip-path="url(#csag)">
<rect x="0" y="0" width="1478" height="1080" fill="#5f5f5f"/>
<g filter="url(#bz)">
<!-- anterior chest wall lighter -->
<path d="M1100,0 L1300,0 L1478,600 L1478,1080 L1150,1080 C1180,900 1100,600 1060,400 Z" fill="#656565"/>
<!-- darker band (mediastinal fat) -->
<path d="M960,20 L1110,20 C1100,200 1085,380 1095,560 C1105,700 1140,820 1180,900 L1060,860 C1040,760 1060,660 1040,560 C1020,420 1000,200 960,20 Z" fill="#585858"/>
<!-- heart -->
<path d="M370,200 C450,110 600,110 720,200 C850,280 980,420 1040,560 C1070,660 1040,770 960,795 C850,825 700,805 600,780 C500,740 420,680 370,600 C320,500 320,400 330,320 Z" fill="#686868"/>
<!-- aortic arch band lighter -->
<path d="M370,130 C500,50 680,80 800,200 C760,190 700,150 600,130 C500,120 420,150 370,200 Z" fill="#6c6c6c"/>
<!-- lung -->
<path d="M40,130 C100,120 150,140 180,112 C170,80 200,70 232,90 C242,120 220,150 250,166 C300,150 340,170 360,220 C350,280 330,330 325,400 C320,480 340,560 372,622 C420,700 480,760 542,812 C562,842 550,880 500,902 C420,912 350,902 300,906 C220,920 150,932 100,962 C70,982 55,1002 40,1030 Z" fill="#171717"/>
<path d="M40,130 C100,120 150,140 180,112 C170,80 200,70 232,90 C242,120 220,150 250,166 C300,150 340,170 360,220 C350,280 330,330 325,400 C320,480 340,560 372,622 C420,700 480,760 542,812 C562,842 550,880 500,902 C420,912 350,902 300,906 C220,920 150,932 100,962 C70,982 55,1002 40,1030 Z" fill="#fff" filter="url(#ltex2)"/>
<path d="M40,148 L175,150 C200,160 218,170 238,186 C248,200 242,216 215,216 C150,226 100,210 40,216 Z" fill="#7c7c7c"/>
<path d="M40,22 L180,22 L182,100 C150,125 100,110 40,118 Z" fill="#727272"/>
<path d="M232,22 L1230,22 L1232,50 C1100,40 800,36 600,60 C540,75 500,95 480,110 C400,140 370,170 362,205 L345,172 C300,150 262,160 250,165 C236,140 244,110 232,90 Z" fill="#6c6c6c"/>
<!-- LV cavity -->
<path d="M600,440 C660,420 720,470 762,530 C802,580 822,620 792,672 C762,712 720,722 690,702 C640,692 590,662 560,642 C580,600 592,520 590,470 Z" fill="#7b7b7b"/>
<!-- sternum segments -->
<circle cx="1215" cy="592" r="52" fill="#707070"/><circle cx="1252" cy="730" r="48" fill="#707070"/><ellipse cx="1090" cy="190" rx="42" ry="55" fill="#6e6e6e"/><ellipse cx="1165" cy="425" rx="36" ry="55" fill="#6c6c6c"/>
<!-- liver bottom -->
<path d="M50,1020 C80,960 200,930 300,920 C420,915 500,910 560,880 C600,960 800,940 1000,880 C1100,850 1180,840 1250,900 L1420,1000 L1420,1080 L50,1080 Z" fill="#636363"/>
<path d="M640,830 C760,790 900,800 980,830 L960,850 C880,830 760,830 660,860 Z" fill="#535353"/>
<!-- stomach gas -->
<path d="M1140,995 C1180,985 1200,1010 1260,1010 C1320,1010 1380,1025 1420,1045 L1420,1062 L1280,1050 C1220,1030 1160,1030 1140,995 Z" fill="#1a1a1a"/>
</g>
<g filter="url(#bz2)">
<g fill="#b8565d">
<path d="M400,325 C450,313 500,340 542,390 C582,420 592,470 582,530 C577,590 562,622 540,642 C500,652 450,622 410,572 C375,510 360,440 370,380 C375,350 385,335 400,325 Z"/>
<ellipse cx="310" cy="116" rx="50" ry="35" transform="rotate(15 310 116)"/>
<circle cx="190" cy="260" r="40"/>
<path d="M437,188 C462,178 477,200 482,225 C502,250 502,280 480,297 C450,292 430,282 420,262 C425,235 430,210 437,188 Z"/>
</g>
<g fill="#999999"><circle cx="548" cy="335" r="8"/><circle cx="585" cy="282" r="7"/><circle cx="1250" cy="727" r="6"/><circle cx="1205" cy="645" r="5"/><circle cx="1242" cy="575" r="5"/><circle cx="450" cy="958" r="8"/></g>
<g fill="#4c4c4c"><circle cx="110" cy="500" r="9"/><circle cx="180" cy="480" r="8"/><circle cx="230" cy="545" r="9"/><circle cx="150" cy="720" r="10"/><circle cx="260" cy="780" r="12"/><circle cx="210" cy="840" r="12"/><circle cx="330" cy="700" r="8"/><circle cx="100" cy="600" r="7"/><circle cx="290" cy="620" r="7"/><circle cx="380" cy="790" r="8"/><circle cx="130" cy="860" r="8"/><circle cx="85" cy="400" r="7"/></g>
</g>
</g>
</g>
<rect x="128" y="650" width="482" height="1" fill="#c43030"/>
<rect x="369" y="546" width="1" height="348" fill="#e0882a"/>
</svg>
<svg class="abs" style="left:0;top:0" width="20" height="20"><path d="M0,0H19L0,19Z" fill="#3c96f5"/></svg>
<div class="vlabel" style="left:23px;top:3.5px"><i>n/a</i><br>Sagittal<svg style="display:inline-block;vertical-align:0px;margin-left:0px" width="8" height="5" viewBox="0 0 8 5" fill="none" stroke="#4488e4" stroke-width="1.500"><path d="M1,1L4,4L7,1"/></svg></div>
<div class="t" style="left:361px;top:2px;width:12px;height:12px;background:#000;color:#8ee88e;font-weight:bold;font-size:11px;text-align:center;line-height:12px">T</div>
<div class="t" style="left:360px;top:362px;width:12px;height:12px;background:#000;color:#8ee88e;font-weight:bold;font-size:11px;text-align:center;line-height:12px">B</div>
<div class="t" style="left:0px;top:182px;color:#8ee88e;font-weight:bold;font-size:12px">P</div>
<div class="t" style="left:723px;top:182px;color:#8ee88e;font-weight:bold;font-size:12px">A</div>
<div class="t" style="left:694px;top:356px;color:#8ee88e;font-weight:bold;font-size:14px">102.4</div>
</div>
<div class="sb" style="left:734px;top:532px;width:16px;height:376px"><div class="sbbtn" style="bottom:0"></div>
<svg class="abs" style="left:4px;top:365px" width="8" height="5"><path d="M0,0.5L4,4.5L8,0.5Z" fill="#606060"/></svg>
<div class="abs" style="left:0;top:359.500px;width:16px;height:1px;background:#cfcfcf"></div>
<div class="abs" style="left:0;top:180px;width:16px;height:16px;background:#fff;border-top:1px solid #ccc;border-bottom:1px solid #ccc"></div></div>

<div class="abs" style="left:755px;top:530px;width:805px;height:381px;background:#e0f5e0"></div>
<div class="abs" style="left:757px;top:532px;width:779px;height:376px;background:#fff;overflow:hidden">
<svg class="abs" style="left:0;top:0" width="779" height="376" viewBox="757 532 779 376">
<defs>
<clipPath id="c3d"><path d="M300,222 L440,150 L480,125 L540,100 L575,90 L575,42 L608,42 L608,130 L640,170 L700,215 L760,240 L820,275 L870,320 L900,370 L935,405 L1086,400 L1236,380 L1356,372 L1436,375 L1496,395 L1556,405 L1596,395 L1626,370 L1656,300 L1666,290 L1671,295 L1651,350 L1636,385 L1726,345 L1751,340 L1766,360 L1736,385 L1686,420 L1696,430 L1766,440 L1801,435 L1766,465 L1756,480 L1771,500 L1786,520 L1816,515 L1841,540 L1846,580 L1876,620 L1926,665 L1946,670 L1971,655 L1976,660 L1951,690 L1966,760 L1986,830 L1981,835 L1956,770 L1936,700 L1916,680 L1866,640 L1831,600 L1816,560 L1796,545 L1776,550 L1771,600 L1776,700 L1766,800 L1746,900 L1706,990 L1676,1050 L1671,1045 L1696,980 L1731,890 L1751,790 L1756,700 L1751,620 L1736,560 L1716,510 L1676,480 L1626,470 L1536,480 L1436,500 L1336,520 L1276,545 L1336,555 L1406,560 L1466,580 L1516,615 L1556,630 L1591,645 L1608,680 L1604,735 L1581,755 L1561,745 L1551,700 L1531,680 L1496,700 L1436,710 L1376,712 L1326,700 L1366,740 L1406,790 L1426,850 L1421,920 L1401,980 L1376,1035 L1361,1020 L1336,985 L1306,970 L1276,940 L1246,975 L1186,1010 L1126,1010 L1066,990 L1016,960 L950,975 L880,970 L840,990 L830,975 L855,950 L860,900 L840,850 L800,790 L760,720 L735,640 L720,600 L660,580 L600,590 L540,600 L490,590 L430,560 L380,510 L380,495 L400,480 L450,450 L435,395 L440,390 L470,445 L520,440 L560,450 L640,455 L735,462 L720,420 L690,395 L650,370 L620,340 L600,300 L560,270 L545,245 L490,225 L460,200 L400,195 Z"/><path d="M370,505 L250,575 L130,670 L30,735 L35,745 L140,690 L270,600 L390,530 Z"/><path d="M375,525 L330,590 L270,680 L215,765 L225,780 L290,700 L345,610 L395,535 Z"/><path d="M498,540 L480,640 L470,760 L468,850 L482,855 L492,760 L505,660 L545,565 Z"/><path d="M470,650 L435,685 L440,697 L478,672 Z"/><path d="M230,415 L300,430 L350,455 L380,480 L375,488 L340,468 L290,445 L230,425 Z"/><path d="M550,340 L620,343 L620,354 L550,350 Z"/><path d="M1386,520 L1456,540 L1456,552 L1392,535 Z"/></clipPath>
<filter id="bump" x="0" y="0" width="100%" height="100%" color-interpolation-filters="sRGB"><feTurbulence type="fractalNoise" baseFrequency="0.085" numOctaves="3" seed="11" result="n"/><feDiffuseLighting in="n" surfaceScale="9" diffuseConstant="1.05" lighting-color="#fff" result="l"><feDistantLight azimuth="235" elevation="58"/></feDiffuseLighting></filter>
<filter id="b8" x="-10%" y="-10%" width="120%" height="120%"><feGaussianBlur stdDeviation="16"/></filter>
<filter id="b4" x="-10%" y="-10%" width="120%" height="120%"><feGaussianBlur stdDeviation="7"/></filter>
</defs>
<g transform="translate(830,545) scale(0.27778)">
<path d="M300,222 L440,150 L480,125 L540,100 L575,90 L575,42 L608,42 L608,130 L640,170 L700,215 L760,240 L820,275 L870,320 L900,370 L935,405 L1086,400 L1236,380 L1356,372 L1436,375 L1496,395 L1556,405 L1596,395 L1626,370 L1656,300 L1666,290 L1671,295 L1651,350 L1636,385 L1726,345 L1751,340 L1766,360 L1736,385 L1686,420 L1696,430 L1766,440 L1801,435 L1766,465 L1756,480 L1771,500 L1786,520 L1816,515 L1841,540 L1846,580 L1876,620 L1926,665 L1946,670 L1971,655 L1976,660 L1951,690 L1966,760 L1986,830 L1981,835 L1956,770 L1936,700 L1916,680 L1866,640 L1831,600 L1816,560 L1796,545 L1776,550 L1771,600 L1776,700 L1766,800 L1746,900 L1706,990 L1676,1050 L1671,1045 L1696,980 L1731,890 L1751,790 L1756,700 L1751,620 L1736,560 L1716,510 L1676,480 L1626,470 L1536,480 L1436,500 L1336,520 L1276,545 L1336,555 L1406,560 L1466,580 L1516,615 L1556,630 L1591,645 L1608,680 L1604,735 L1581,755 L1561,745 L1551,700 L1531,680 L1496,700 L1436,710 L1376,712 L1326,700 L1366,740 L1406,790 L1426,850 L1421,920 L1401,980 L1376,1035 L1361,1020 L1336,985 L1306,970 L1276,940 L1246,975 L1186,1010 L1126,1010 L1066,990 L1016,960 L950,975 L880,970 L840,990 L830,975 L855,950 L860,900 L840,850 L800,790 L760,720 L735,640 L720,600 L660,580 L600,590 L540,600 L490,590 L430,560 L380,510 L380,495 L400,480 L450,450 L435,395 L440,390 L470,445 L520,440 L560,450 L640,455 L735,462 L720,420 L690,395 L650,370 L620,340 L600,300 L560,270 L545,245 L490,225 L460,200 L400,195 Z" fill="#d8707a" stroke="#d8707a" stroke-width="5" stroke-linejoin="round"/><path d="M370,505 L250,575 L130,670 L30,735 L35,745 L140,690 L270,600 L390,530 Z" fill="#d8707a" stroke="#d8707a" stroke-width="5" stroke-linejoin="round"/><path d="M375,525 L330,590 L270,680 L215,765 L225,780 L290,700 L345,610 L395,535 Z" fill="#d8707a" stroke="#d8707a" stroke-width="5" stroke-linejoin="round"/><path d="M498,540 L480,640 L470,760 L468,850 L482,855 L492,760 L505,660 L545,565 Z" fill="#d8707a" stroke="#d8707a" stroke-width="5" stroke-linejoin="round"/><path d="M470,650 L435,685 L440,697 L478,672 Z" fill="#d8707a" stroke="#d8707a" stroke-width="5" stroke-linejoin="round"/><path d="M230,415 L300,430 L350,455 L380,480 L375,488 L340,468 L290,445 L230,425 Z" fill="#d8707a" stroke="#d8707a" stroke-width="5" stroke-linejoin="round"/><path d="M550,340 L620,343 L620,354 L550,350 Z" fill="#d8707a" stroke="#d8707a" stroke-width="5" stroke-linejoin="round"/><path d="M1386,520 L1456,540 L1456,552 L1392,535 Z" fill="#d8707a" stroke="#d8707a" stroke-width="5" stroke-linejoin="round"/>
<g clip-path="url(#c3d)">
<rect x="0" y="0" width="2000" height="1080" fill="#d8707a"/>
<g filter="url(#b8)">
<!-- highlights -->
<ellipse cx="1020" cy="620" rx="200" ry="140" fill="#d9767e" opacity=".8"/>
<path d="M1100,430 L1450,400 L1640,430 L1700,470 L1500,470 L1300,500 Z" fill="#dc7a82" opacity=".9"/>
<path d="M1290,580 L1480,600 L1590,670 L1500,680 L1350,680 Z" fill="#de7e86" opacity=".9"/>
<path d="M480,140 L600,150 L760,260 L860,340 L780,330 L640,250 Z" fill="#d8767e" opacity=".8"/>
<path d="M420,500 L700,490 L720,540 L480,550 Z" fill="#d4727a" opacity=".7"/>
<!-- shadows -->
<path d="M740,650 C800,780 900,850 1050,860 C1200,850 1300,780 1330,705 L1430,850 L1400,1040 L830,1000 Z" fill="#a6464f" opacity=".85"/>
<path d="M1280,800 L1340,780 L1420,860 L1400,1000 L1330,960 Z" fill="#d06a72" opacity=".7"/>
<path d="M1180,470 C1250,520 1290,540 1340,545 L1276,552 C1240,560 1200,540 1150,500 Z" fill="#8e3640"/>
<path d="M620,330 L740,470 L700,470 L600,380 Z" fill="#a8485a" opacity=".7"/>
</g>
<g filter="url(#b4)"><path d="M300,222 L440,150 L480,125 L540,100 L575,90 L575,42 L608,42 L608,130 L640,170 L700,215 L760,240 L820,275 L870,320 L900,370 L935,405 L1086,400 L1236,380 L1356,372 L1436,375 L1496,395 L1556,405 L1596,395 L1626,370 L1656,300 L1666,290 L1671,295 L1651,350 L1636,385 L1726,345 L1751,340 L1766,360 L1736,385 L1686,420 L1696,430 L1766,440 L1801,435 L1766,465 L1756,480 L1771,500 L1786,520 L1816,515 L1841,540 L1846,580 L1876,620 L1926,665 L1946,670 L1971,655 L1976,660 L1951,690 L1966,760 L1986,830 L1981,835 L1956,770 L1936,700 L1916,680 L1866,640 L1831,600 L1816,560 L1796,545 L1776,550 L1771,600 L1776,700 L1766,800 L1746,900 L1706,990 L1676,1050 L1671,1045 L1696,980 L1731,890 L1751,790 L1756,700 L1751,620 L1736,560 L1716,510 L1676,480 L1626,470 L1536,480 L1436,500 L1336,520 L1276,545 L1336,555 L1406,560 L1466,580 L1516,615 L1556,630 L1591,645 L1608,680 L1604,735 L1581,755 L1561,745 L1551,700 L1531,680 L1496,700 L1436,710 L1376,712 L1326,700 L1366,740 L1406,790 L1426,850 L1421,920 L1401,980 L1376,1035 L1361,1020 L1336,985 L1306,970 L1276,940 L1246,975 L1186,1010 L1126,1010 L1066,990 L1016,960 L950,975 L880,970 L840,990 L830,975 L855,950 L860,900 L840,850 L800,790 L760,720 L735,640 L720,600 L660,580 L600,590 L540,600 L490,590 L430,560 L380,510 L380,495 L400,480 L450,450 L435,395 L440,390 L470,445 L520,440 L560,450 L640,455 L735,462 L720,420 L690,395 L650,370 L620,340 L600,300 L560,270 L545,245 L490,225 L460,200 L400,195 Z M370,505 L250,575 L130,670 L30,735 L35,745 L140,690 L270,600 L390,530 Z M375,525 L330,590 L270,680 L215,765 L225,780 L290,700 L345,610 L395,535 Z M498,540 L480,640 L470,760 L468,850 L482,855 L492,760 L505,660 L545,565 Z M470,650 L435,685 L440,697 L478,672 Z M230,415 L300,430 L350,455 L380,480 L375,488 L340,468 L290,445 L230,425 Z M550,340 L620,343 L620,354 L550,350 Z M1386,520 L1456,540 L1456,552 L1392,535 Z" fill="none" stroke="#8a343e" stroke-width="14" opacity=".5"/></g>
<rect x="0" y="0" width="2000" height="1080" filter="url(#bump)" style="mix-blend-mode:multiply" opacity=".48"/>
</g>
<ellipse cx="1583" cy="722" rx="17" ry="26" fill="#f29aa0" transform="rotate(12 1583 722)"/>
</g>
<g transform="translate(820,540) scale(0.35194)">
<path d="M750,945 L873,1022" stroke="#2eb83a" stroke-width="6"/>
<path d="M770,1045 L850,920" stroke="#d8883a" stroke-width="5"/>
<circle cx="810" cy="983" r="10" fill="#777" stroke="#444" stroke-width="2"/>
</g>
</svg>
<svg class="abs" style="left:760px;top:3px" width="17" height="17" viewBox="0 0 17 17" fill="none" stroke="#4a9ad8" stroke-width="1.8"><path d="M3,2.5H14.5V14M6,5.5H11.5V11M11.5,5.5L3,14"/></svg>
</div>
<div class="abs" id="tb3d" style="left:1536px;top:532px;width:21px;height:376px;background:#f0f0f5"></div>


<div class="abs" style="left:1538px;top:534.0px;width:19px;height:19px;background:#b4c2e2"></div><svg class="abs" style="left:1538px;top:534.5px" width="18" height="18" viewBox="0 0 18 18" fill="none"><rect x="3" y="6" width="2.400" height="2.400" fill="#58b070"/><rect x="3" y="10" width="2.400" height="2.400" fill="#58b070"/><rect x="3" y="14" width="2.400" height="2.400" fill="#58b070"/><rect x="7" y="6" width="2.400" height="2.400" fill="#58b070"/><rect x="7" y="10" width="2.400" height="2.400" fill="#58b070"/><rect x="7" y="14" width="2.400" height="2.400" fill="#58b070"/><rect x="11" y="6" width="2.400" height="2.400" fill="#58b070"/><rect x="11" y="10" width="2.400" height="2.400" fill="#58b070"/><rect x="11" y="14" width="2.400" height="2.400" fill="#58b070"/><rect x="6" y="2.500" width="2" height="2" fill="#6878a0"/><rect x="10" y="2.500" width="2" height="2" fill="#6878a0"/><rect x="14" y="2.500" width="2" height="2" fill="#6878a0"/><rect x="14.500" y="6" width="2" height="2" fill="#6878a0"/><rect x="14.500" y="10" width="2" height="2" fill="#6878a0"/></svg><svg class="abs" style="left:1538px;top:559px" width="18" height="18" viewBox="0 0 18 18" fill="none"><circle cx="7.500" cy="7" r="5" stroke="#666" stroke-width="1.100"/><circle cx="11" cy="11" r="4.800" fill="#7ab4f0" fill-opacity=".75" stroke="#4a90e0" stroke-width=".8"/></svg><svg class="abs" style="left:1538px;top:579px" width="18" height="18" viewBox="0 0 18 18" fill="none"><rect x="4.500" y="6" width="9" height="9" fill="#4caa50" stroke="#2c7a30" stroke-width=".8"/><path d="M4,3.500H14" stroke="#555" stroke-dasharray="1.500 1.500"/><path d="M1.500,9.500H4M14,9.500H16.500" stroke="#555" stroke-width="1"/></svg><svg class="abs" style="left:1538px;top:597.5px" width="18" height="18" viewBox="0 0 18 18" fill="none"><path d="M9,2.500L15.500,15.500H2.500Z" stroke="#555" stroke-width="1.100"/><path d="M5.800,9H12.200L9,15.500Z" stroke="#555" stroke-width="1"/></svg><svg class="abs" style="left:1538px;top:622.5px" width="18" height="18" viewBox="0 0 18 18" fill="none"><path d="M6,3.500H12L16,9L12,14.500H6L2.500,9Z" fill="#f0b028" stroke="#b07810" stroke-width=".9"/><path d="M9,9L12,3.500M9,9H16M9,9L6,14.500" stroke="#b07810" stroke-width=".8"/></svg><svg class="abs" style="left:1538px;top:647.5px" width="18" height="18" viewBox="0 0 18 18" fill="none"><path d="M9,2V16M2,9H16M7,4L9,2L11,4M7,14L9,16L11,14M4,7L2,9L4,11M14,7L16,9L14,11" stroke="#555" stroke-width="1.100"/></svg><svg class="abs" style="left:1538px;top:667px" width="18" height="18" viewBox="0 0 18 18" fill="none"><path d="M3,7A6.300,6.300 0 0 1 15,6M15,11A6.300,6.300 0 0 1 3,12" stroke="#555" stroke-width="1.100"/><path d="M1.500,9.500L3,7L5.500,8.500M16.500,8.500L15,11L12.500,9.500" stroke="#555" stroke-width="1.100"/></svg><svg class="abs" style="left:1538px;top:686px" width="18" height="18" viewBox="0 0 18 18" fill="none"><path d="M9,2L15.500,5V13L9,16.500L2.500,13V5Z" fill="#e8f4ff" stroke="#555" stroke-width="1.100"/><path d="M2.500,5L9,8L15.500,5M9,8V16.500" stroke="#4a9ae8" stroke-width="1.100"/></svg><svg class="abs" style="left:1538px;top:710.5px" width="18" height="18" viewBox="0 0 18 18" fill="none"><path d="M2,12L9,9L16,12L9,15.500Z" fill="#e84840"/><path d="M5,4V12L9,13V6Z" fill="#f0a828"/><path d="M9,6V13L13,12V4Z" fill="#3a78d0"/><path d="M9,3V9L12.500,10V5Z" fill="#f0b838"/></svg><svg class="abs" style="left:1538px;top:729.5px" width="18" height="18" viewBox="0 0 18 18" fill="none"><path d="M1.500,9C4,4 14,4 16.500,9C14,14 4,14 1.500,9Z" stroke="#555" stroke-width="1.100"/><circle cx="9" cy="9" r="2.300" stroke="#555" stroke-width="1.100"/></svg><div class="abs" style="left:1538px;top:748.5px;width:19px;height:19px;background:#b4c2e2"></div><svg class="abs" style="left:1538px;top:749px" width="18" height="18" viewBox="0 0 18 18" fill="none"><path d="M9,1V17" stroke="#38a848" stroke-width="1.800"/><path d="M1,9H17" stroke="#e03838" stroke-width="2"/><path d="M4,15L14,4" stroke="#e8a020" stroke-width="1.600"/><path d="M9,4L14,9H9Z" fill="#e8a020" opacity=".8"/></svg><svg class="abs" style="left:1538px;top:768px" width="18" height="18" viewBox="0 0 18 18" fill="none"><path d="M6,3V12H15" stroke="#f090a0" stroke-width="1.100"/><path d="M6,12L2.500,15.500" stroke="#90c860" stroke-width="1.100"/><path d="M4.500,4.500L6,2.500L7.500,4.500" stroke="#f0b040" stroke-width="1"/><path d="M13.500,10.500L15.500,12L13.500,13.500" stroke="#e05080" stroke-width="1"/></svg><svg class="abs" style="left:1538px;top:788px" width="18" height="18" viewBox="0 0 18 18" fill="none"><rect x="2.500" y="2.500" width="13" height="13" rx="1.500" fill="#fff" stroke="#333" stroke-width="1.300"/><path d="M9,2.500H14Q15.500,2.500 15.500,4V14Q15.500,15.500 14,15.500H9Z" fill="#333"/><circle cx="9" cy="9" r="3.500" fill="#333"/><path d="M9,5.500A3.500,3.500 0 0 1 9,12.500Z" fill="#fff"/></svg><div class="abs" style="left:1540px;top:619px;width:14px;height:1px;background:#dcdce4"></div><div class="abs" style="left:1540px;top:643px;width:14px;height:1px;background:#dcdce4"></div><div class="abs" style="left:1540px;top:707px;width:14px;height:1px;background:#dcdce4"></div>
<!-- RIGHT PANEL -->
<div class="abs" style="left:1560px;top:157px;width:360px;height:883px;background:#fff"></div>
<div class="abs" style="left:1563px;top:157px;width:1px;height:883px;background:#c2c2ca"></div>
<div class="t" style="left:1567px;top:164.200px;font-size:12px;color:#484848">Project Management</div>
<svg class="abs" style="left:1886px;top:162px" width="30" height="13" viewBox="0 0 30 13" fill="none" stroke="#222" stroke-width="1.6"><path d="M2,4.5H8.5V11H2ZM4,4.5V2H10.5V8.5H8.5"/><path d="M20,2L28,11M28,2L20,11" stroke-width="1.9"/></svg>
<!-- tabs 1 -->
<div class="abs" style="left:1564px;top:200px;width:356px;height:400px;border:1px solid #c8c8c8;border-right:none;background:#fff"></div>
<div class="abs" style="left:1613px;top:183px;width:44px;height:18px;border:1px solid #c8c8c8;border-bottom:none;background:#fff"></div>
<div class="ptab" style="left:1571px;top:187px">Images</div>
<div class="ptab" style="left:1621px;top:187px">Masks</div>
<div class="ptab" style="left:1665px;top:187px">Measurements</div>
<!-- header -->
<div class="hdr" style="left:1568px;top:208px">Name</div>
<div class="hdr" style="left:1688px;top:208px;width:31.5px;overflow:hidden">Visible</div>
<div class="hdr" style="left:1727px;top:208px">Lower Thres</div>
<div class="hdr" style="left:1799px;top:208px">Upper Thres</div>
<div class="hdr" style="left:1871px;top:208px;width:37px;overflow:hidden">Assembly</div>
<div class="hdr" style="left:1915px;top:208px">I</div>
<div class="abs" style="left:1684px;top:203px;width:1px;height:21px;background:#e4e4e4"></div>
<div class="abs" style="left:1722px;top:203px;width:1px;height:21px;background:#e4e4e4"></div>
<div class="abs" style="left:1794px;top:203px;width:1px;height:21px;background:#e4e4e4"></div>
<div class="abs" style="left:1866px;top:203px;width:1px;height:21px;background:#e4e4e4"></div>
<div class="abs" style="left:1911px;top:203px;width:1px;height:21px;background:#e4e4e4"></div>
<!-- rows -->
<div class="abs" style="left:1565px;top:250px;width:355px;height:23px;background:#f1f1f4"></div>
<div class="abs" style="left:1911px;top:251px;width:10px;height:21px;background:#fff;border:1px solid #c8c8c8"></div>
<div class="abs" style="left:1568px;top:233px;width:9px;height:9px;background:#4be84b"></div>
<div class="abs" style="left:1568px;top:257px;width:9px;height:9px;background:#a8729a"></div>
<div class="abs" style="left:1568px;top:281px;width:9px;height:9px;background:#f57e82"></div>
<div class="row" style="left:1584px;top:232px">Left Heart</div>
<div class="row" style="left:1584px;top:256px">Left Atrium</div>
<div class="row" style="left:1584px;top:280px">Rest of Heart</div>
<svg class="abs" style="left:1696px;top:231px" width="14" height="12" viewBox="0 0 14 12" fill="none" stroke="#6a6a6a" stroke-width="1"><path d="M1.5,6C3.5,2.8 10.5,2.8 12.5,6C10.5,9.2 3.5,9.2 1.5,6Z"/><path d="M10.5,1.5L3.5,10.5"/></svg><svg class="abs" style="left:1696px;top:255px" width="14" height="12" viewBox="0 0 14 12" fill="none" stroke="#4a86c4" stroke-width="1"><path d="M1.5,6C3.5,2.8 10.5,2.8 12.5,6C10.5,9.2 3.5,9.2 1.5,6Z"/><circle cx="7" cy="6" r="1.6" fill="#4a86c4"/></svg><svg class="abs" style="left:1696px;top:279px" width="14" height="12" viewBox="0 0 14 12" fill="none" stroke="#6a6a6a" stroke-width="1"><path d="M1.5,6C3.5,2.8 10.5,2.8 12.5,6C10.5,9.2 3.5,9.2 1.5,6Z"/><path d="M10.5,1.5L3.5,10.5"/></svg>
<div class="row" style="left:1726px;top:232px;font-size:11px">191</div><div class="row" style="left:1798px;top:232px;font-size:11px">1758</div><div class="row" style="left:1914px;top:232px;font-size:11px">n</div>
<div class="row" style="left:1726px;top:256px;font-size:11px">191</div><div class="row" style="left:1798px;top:256px;font-size:11px">1758</div><div class="row" style="left:1914px;top:256px;font-size:11px">n</div>
<div class="row" style="left:1726px;top:280px;font-size:11px">191</div><div class="row" style="left:1798px;top:280px;font-size:11px">1758</div><div class="row" style="left:1914px;top:280px;font-size:11px">n</div>
<div class="abs" style="left:1565px;top:583px;width:1354px;max-width:354px;height:16px;background:#e8e8e8;border:1px solid #c4c4c4"></div>
<div class="abs" style="left:1566px;top:584px;width:15px;height:14px;background:#fff;border-right:1px solid #c4c4c4"></div>
<div class="abs" style="left:1903px;top:584px;width:15px;height:14px;background:#fff;border-left:1px solid #c4c4c4"></div>
<div class="abs" style="left:1581px;top:584px;width:267px;height:14px;background:#fff;border-right:1px solid #c4c4c4"></div>
<svg class="abs" style="left:1571px;top:587px" width="5" height="8"><path d="M4.5,0L0.5,4L4.5,8Z" fill="#606060"/></svg>
<svg class="abs" style="left:1908px;top:587px" width="5" height="8"><path d="M0.5,0L4.5,4L0.5,8Z" fill="#606060"/></svg>
<!-- icon row 1 -->
<svg class="abs" style="left:1826px;top:603px" width="92" height="12" viewBox="0 0 92 12" fill="none" stroke="#555" stroke-width="1"><path d="M1,6H10M5.5,1.5V10.5"/><path d="M15,2L23,10M23,2L15,10"/><rect x="28.500" y="1.500" width="9" height="9" rx="1.500"/><path d="M33,4V4.800M33,6V8.500"/><path d="M42.500,1.500H47L49.500,4V10.500H42.500ZM47,1.500V4H49.500"/><path d="M55,8L60,2.500L63,5L58,10.500H54.500Z" fill="#555"/><path d="M69.500,1.500L73.500,3.500V8.500L69.500,10.500L65.500,8.500V3.500ZM65.500,3.500L69.500,5.500L73.500,3.500M69.500,5.500V10.500"/><circle cx="85.500" cy="6" r="4.500"/><path d="M83,5L85.500,7.500L88,5"/></svg>
<div class="t" style="left:1738px;top:611px;font-size:9px;color:#666">...</div>
<!-- tabs 2 -->
<div class="abs" style="left:1564px;top:637px;width:356px;height:360px;border:1px solid #c8c8c8;border-right:none;background:#fff"></div>
<div class="abs" style="left:1564px;top:620px;width:49px;height:18px;border:1px solid #c8c8c8;border-bottom:none;background:#fff"></div>
<div class="ptab" style="left:1571px;top:624px">Objects</div>
<div class="ptab" style="left:1621px;top:624px">Reslice Objects</div>
<div class="ptab" style="left:1707px;top:624px">Soft tissue</div>
<div class="hdr" style="left:1568px;top:646px">Name</div>
<div class="hdr" style="left:1688px;top:646px;width:31.5px;overflow:hidden">Visible</div>
<div class="hdr" style="left:1727px;top:646px;width:36px;overflow:hidden">Contour</div>
<div class="hdr" style="left:1771px;top:646px;width:33px;overflow:hidden">Transpar</div>
<div class="hdr" style="left:1811px;top:646px">Images</div>
<div class="abs" style="left:1684px;top:640px;width:1px;height:21px;background:#e4e4e4"></div>
<div class="abs" style="left:1722px;top:640px;width:1px;height:21px;background:#e4e4e4"></div>
<div class="abs" style="left:1766px;top:640px;width:1px;height:21px;background:#e4e4e4"></div>
<div class="abs" style="left:1806px;top:640px;width:1px;height:21px;background:#e4e4e4"></div>
<div class="abs" style="left:1565px;top:981px;width:1354px;max-width:354px;height:16px;background:#e8e8e8;border:1px solid #c4c4c4"></div>
<div class="abs" style="left:1566px;top:982px;width:15px;height:14px;background:#fff;border-right:1px solid #c4c4c4"></div>
<div class="abs" style="left:1903px;top:982px;width:15px;height:14px;background:#fff;border-left:1px solid #c4c4c4"></div>
<div class="abs" style="left:1581px;top:982px;width:314px;height:14px;background:#fff;border-right:1px solid #c4c4c4"></div>
<svg class="abs" style="left:1571px;top:985px" width="5" height="8"><path d="M4.5,0L0.5,4L4.5,8Z" fill="#606060"/></svg>
<svg class="abs" style="left:1908px;top:985px" width="5" height="8"><path d="M0.5,0L4.5,4L0.5,8Z" fill="#606060"/></svg>
<svg class="abs" style="left:1813px;top:1000px" width="106" height="12" viewBox="0 0 106 12" fill="none" stroke="#555" stroke-width="1"><path d="M1,6H10M5.5,1.500V10.500"/><path d="M15,2L23,10M23,2L15,10" stroke="#999"/><rect x="28.500" y="1.500" width="9" height="9" rx="1.500" stroke="#999"/><path d="M33,4V4.800M33,6V8.500" stroke="#999"/><path d="M42.500,1.500H47L49.500,4V10.500H42.500Z" stroke="#999"/><path d="M54.500,2.500H58L59.500,4H64.500V10.500H54.500Z"/><path d="M67.500,2.500H71L72.500,4H77.500V10.500H67.500Z" stroke="#999"/><path d="M81,2L84.500,6V10.500M88,2L84.500,6"/><circle cx="99.500" cy="6" r="4.500"/><path d="M97,5L99.500,7.500L102,5"/></svg>
<div class="t" style="left:1738px;top:1008px;font-size:9px;color:#666">...</div>
<!-- bottom tabs -->
<div class="abs" style="left:1564px;top:1018px;width:101px;height:19px;border:1px solid #c8c8c8;background:#fff"></div>
<div class="ptab" style="left:1571px;top:1022px">Simulation Objects</div>
<div class="ptab" style="left:1672px;top:1022px">Snap</div>
<div class="ptab" style="left:1711px;top:1022px">Transformations</div>


<!-- LOG -->
<div class="abs" style="left:0;top:911px;width:1560px;height:129px;background:#fff"></div>
<div class="abs" style="left:0;top:932px;width:1560px;height:1px;background:#b4b4bc"></div>
<div class="abs" style="left:0;top:914px;width:40px;height:19px;border:1px solid #c8c8c8;border-bottom:none;background:#fff"></div>
<div class="ptab" style="left:13px;top:919px">Log</div>
<div class="ptab" style="left:52px;top:919px">Volume Rendering</div>
<div class="ptab" style="left:160px;top:919px">Contrast</div>
<div class="abs" style="left:0;top:933px;width:1543px;height:107px;overflow:hidden;padding-top:1px"><div class="abs" style="left:0;top:1px;width:100%;height:100%">
<div class="log" style="top:-2px"><span class="ts">[13:57:50]</span> Multiple Slice Edit is closed</div>
<div class="log" style="top:14px"><span class="ts">[13:57:51]</span> Multiple Slice Edit tool is open</div>
<div class="log b" style="top:30px">Select a marking tool and start to outline the region of interest in the 2D viewports.</div>
<div class="log" style="top:46px"><span class="ts">[13:58:09]</span> Multiple Slice Edit is closed</div>
<div class="log" style="top:62px"><span class="ts">[13:58:27]</span> Multiple Slice Edit tool is open</div>
<div class="log b" style="top:78px">Select a marking tool and start to outline the region of interest in the 2D viewports.</div>
</div></div>
<div class="abs" style="left:1543px;top:933px;width:17px;height:107px;background:#e9e9e9;border-left:1px solid #d0d0d0;border-right:1px solid #d0d0d0"></div>
<div class="abs" style="left:1544px;top:933px;width:15px;height:17px;background:#fff;border-bottom:1px solid #c8c8c8"></div>
<div class="abs" style="left:1544px;top:1005px;width:15px;height:17px;background:#fff;border-top:1px solid #c8c8c8;border-bottom:1px solid #c8c8c8"></div>
<div class="abs" style="left:1544px;top:1022px;width:15px;height:18px;background:#fff"></div>
<svg class="abs" style="left:1547px;top:939px" width="8" height="5"><path d="M0,4.500L4,0.500L8,4.500Z" fill="#606060"/></svg>
<svg class="abs" style="left:1547px;top:1029px" width="8" height="5"><path d="M0,0.500L4,4.500L8,0.500Z" fill="#606060"/></svg>


<!-- STATUS -->
<div class="abs" style="left:0;top:1040px;width:1920px;height:20px;background:#2f5ea0"></div>
<div class="t" style="left:2px;top:1045.5px;font-size:10.2px;color:#c4d6f8">Zooming 100.00%</div>
<div class="t" style="left:1817.5px;top:1045.5px;font-size:10.2px;color:#c4d6f8">No data or out of view</div>
<div class="abs" style="left:0;top:1060px;width:1920px;height:20px;background:#000"></div>

<!-- DIALOG -->
<div class="abs" id="dlg" style="left:562px;top:296px;width:256px;height:322px;background:#fff;box-shadow:0 0 5px rgba(0,0,0,.35)"></div>
<svg class="abs" style="left:572px;top:303px" width="16" height="16" viewBox="0 0 16 16" fill="none"><g stroke="#2e9ad8" stroke-width="2.200" stroke-linecap="round"><path d="M3.500,5L7.500,2.500M4.500,8.500L10,5M6.500,11.500L11,8.500"/></g><path d="M1,14.500H13.500" stroke="#f0b030" stroke-width="1.300"/></svg>
<div class="t" style="left:591px;top:304.800px;font-size:12px;color:#111">Multiple Slice Edit</div>
<svg class="abs" style="left:795px;top:304px" width="12" height="12" viewBox="0 0 12 12" stroke="#111" stroke-width="1.100"><path d="M1,1L11,11M11,1L1,11"/></svg>
<div class="t dl" style="left:575px;top:338px;font-weight:bold">Selection</div>
<div class="abs cb" style="left:575px;top:352px;width:109px;height:19px"></div>
<div class="abs" style="left:580px;top:357px;width:10px;height:9px;background:#f07882"></div>
<div class="t dt" style="left:596px;top:357.500px">Left Atrium</div>
<svg class="abs" style="left:670px;top:359px" width="9" height="6" viewBox="0 0 9 6" fill="none" stroke="#555" stroke-width="1.200"><path d="M1,1L4.500,4.500L8,1"/></svg>
<div class="t dl" style="left:575px;top:383.800px;font-weight:bold">Operation</div>
<div class="abs cb" style="left:575px;top:396.500px;width:230px;height:19px;border-radius:2px"></div>
<div class="abs" style="left:575px;top:396.500px;width:77px;height:19px;background:#2a8cf2;border-radius:2px 0 0 2px"></div>
<div class="abs" style="left:727.500px;top:397px;width:1px;height:18px;background:#d4d4d4"></div>
<div class="t dt" style="left:614.500px;top:403px;color:#fff;transform:translateX(-50%)">Add</div>
<div class="t dt" style="left:690px;top:403px;transform:translateX(-50%)">Remove</div>
<div class="t dt" style="left:766px;top:403px;transform:translateX(-50%)">Threshold</div>
<div class="t dl" style="left:575px;top:428.600px;font-weight:bold">Options</div>
<div class="abs cb" style="left:575px;top:444.500px;width:109px;height:19px"></div>
<div class="abs cb" style="left:696.500px;top:444.500px;width:108.500px;height:19px"></div>
<svg class="abs" style="left:579px;top:448px" width="12" height="12" viewBox="0 0 12 12"><circle cx="6" cy="6" r="4.300" fill="none" stroke="#333" stroke-width="1"/></svg>
<div class="t dt" style="left:596px;top:450px">Ellipse</div>
<svg class="abs" style="left:670px;top:451.5px" width="9" height="6" viewBox="0 0 9 6" fill="none" stroke="#555" stroke-width="1.200"><path d="M1,1L4.500,4.500L8,1"/></svg>
<svg class="abs" style="left:700px;top:447px" width="14" height="14" viewBox="0 0 14 14" fill="none"><path d="M5,9H1.500V2.500H11V6" stroke="#333" stroke-width="1.100"/><path d="M7,6V13L9,11L10.500,13.500L11.500,13L10,10.500H12.500Z" fill="#111"/></svg>
<div class="t dt" style="left:718px;top:450px">Indicate View</div>
<svg class="abs" style="left:791.5px;top:451.5px" width="9" height="6" viewBox="0 0 9 6" fill="none" stroke="#555" stroke-width="1.200"><path d="M1,1L4.500,4.500L8,1"/></svg>
<div class="t dt" style="left:575px;top:476.500px;font-size:9.600px">Width</div>
<div class="t dt" style="left:575px;top:500px;font-size:9.600px">Height</div>
<div class="abs cb" style="left:619.500px;top:471.500px;width:44.500px;height:18px"></div>
<div class="abs cb" style="left:619.500px;top:494.500px;width:44.500px;height:18px"></div>
<div class="t dt" style="left:638px;top:476.500px">15</div>
<div class="t dt" style="left:638px;top:500px">15</div>
<svg class="abs" style="left:653px;top:473px" width="9" height="38" viewBox="0 0 9 38" fill="none" stroke="#666" stroke-width="1.100"><path d="M1.500,5L4.500,2L7.500,5M1.500,10.500L4.500,13.500L7.500,10.500M1.500,28L4.500,25L7.500,28M1.500,33.500L4.500,36.500L7.500,33.500"/></svg>
<svg class="abs" style="left:670px;top:484px" width="8" height="17" viewBox="0 0 8 17" fill="none" stroke="#444" stroke-width="1.300"><path d="M1,2C4,1 6,3 5,7M2.500,6.500H6.500M1,15C4,16 6,14 5,10M2.500,10.500H6.500"/></svg>
<div class="t dt" style="left:697.500px;top:479px">Mode</div>
<div class="abs" style="left:696.500px;top:494px;width:19.500px;height:19px;background:#2a8cf2;border-radius:1.500px"></div>
<div class="abs" style="left:722px;top:494px;width:19.500px;height:19px;background:#fff;border:1px solid #9a9a9a;border-radius:1.500px"></div>
<svg class="abs" style="left:698.500px;top:496px" width="16" height="16" viewBox="0 0 16 16" fill="none" stroke="#fff" stroke-width="1.200"><path d="M3,11L10,3.500C11,2.500 12.500,4 11.500,5L5,12L2.500,12.500Z"/><path d="M9,12H13M11,10V14"/></svg>
<svg class="abs" style="left:724px;top:496px" width="16" height="16" viewBox="0 0 16 16" fill="none" stroke="#888" stroke-width="1.100"><path d="M3,11L10,3.500C11,2.500 12.500,4 11.500,5L5,12L2.500,12.500Z"/><path d="M8,12.500H13"/></svg>
<div class="abs" style="left:575.500px;top:529.500px;width:9px;height:9px;border:1px solid #333;border-radius:1px;background:#fff"></div>
<div class="t dt" style="left:591px;top:530px">Hide all the markings</div>
<div class="abs cb" style="left:575px;top:553.500px;width:101px;height:19px"></div>
<svg class="abs" style="left:583px;top:558px" width="10" height="10" viewBox="0 0 10 10"><rect x="1" y="2" width="3.500" height="6" fill="#bbb"/><circle cx="6" cy="5" r="3" fill="#c4c4c4"/></svg>
<div class="t dt" style="left:599.500px;top:559px;color:#bcbcbc;font-size:8.200px">INTERPOLATION</div>
<div class="abs" style="left:697px;top:558px;width:10px;height:10px;background:#2a8cf2;border-radius:1.500px"></div>
<svg class="abs" style="left:697px;top:558px" width="10" height="10" viewBox="0 0 10 10" fill="none" stroke="#fff" stroke-width="1.400"><path d="M2,5L4.200,7.200L8,2.800"/></svg>
<div class="t dt" style="left:713.500px;top:558.500px;font-size:9.600px">Auto-Interpolate</div>
<div class="abs" style="left:575px;top:583px;width:229px;height:1px;background:#c8c8c8"></div>
<svg class="abs" style="left:575px;top:594px" width="16" height="16" viewBox="0 0 16 16" fill="none" stroke="#333" stroke-width="1"><circle cx="8" cy="7.800" r="6.300"/><path d="M8,7V11.500" stroke-width="1.300"/><circle cx="8" cy="4.800" r=".8" fill="#333" stroke="none"/></svg>
<div class="abs cb" style="left:606.500px;top:592px;width:57px;height:19px"></div>
<div class="abs" style="left:670px;top:592px;width:57.500px;height:19px;border:1px solid #444;border-radius:2px;background:#fff"></div>
<div class="abs cb" style="left:744px;top:592px;width:57px;height:19px"></div>
<div class="t dt" style="left:635px;top:598px;color:#c4c4c4;font-size:8px;transform:translateX(-50%)">OK</div>
<div class="t dt" style="left:699px;top:598px;color:#222;font-size:8px;transform:translateX(-50%)">CANCEL</div>
<div class="t dt" style="left:772.500px;top:598px;color:#c4c4c4;font-size:8px;transform:translateX(-50%)">APPLY</div>
<!-- cursor highlight -->
<svg class="abs" style="left:708px;top:310px" width="60" height="60" viewBox="0 0 60 60"><path d="M30,6C42,5 53,16 52,29C51,43 41,52 28,51C16,50 6,41 7,27C8,15 18,7 30,6Z" fill="#efe326"/><path d="M29.500,28.500V44L33,40.500L35.500,46.500L38,45.500L35.500,39.500H40.500Z" fill="#fff" stroke="#111" stroke-width="1.100" stroke-linejoin="round"/></svg>

</div>
</body>
</html>
